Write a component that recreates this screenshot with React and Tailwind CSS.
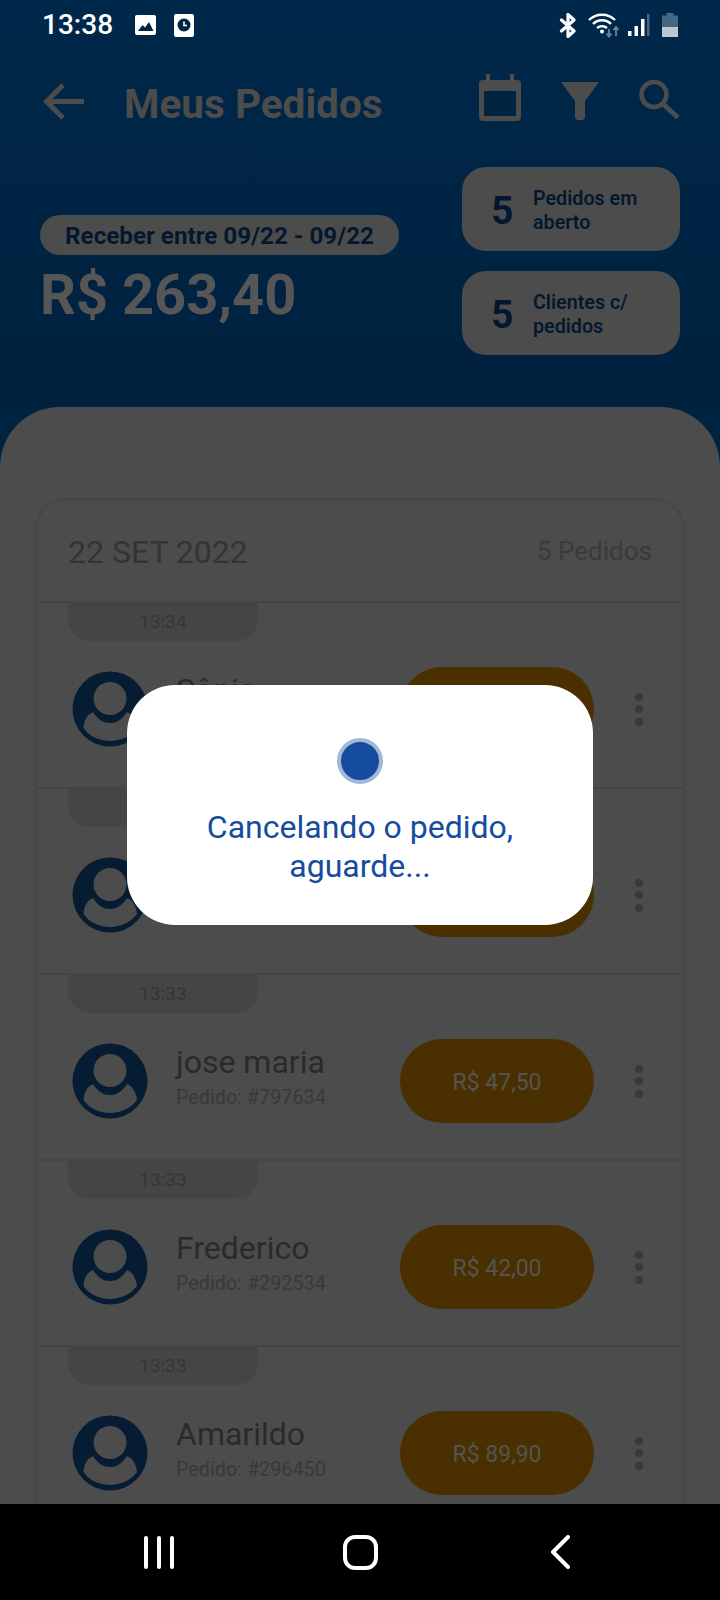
const FG = "#4c4c4c";
const BG = "#002340";
const NAVY = "#061c33";

function Avatar() {
  return (
    <svg width="76" height="76" viewBox="0 0 76 76" className="shrink-0">
      <circle cx="38" cy="38" r="37.5" fill={NAVY} />
      <circle cx="38" cy="27.5" r="16.5" fill={FG} />
      <path d="M11.5 57 C12 48 16 43 21 41 C26 49 32 52 38 52 C44 52 50 49 55 41 C60 43 64 48 65 57 C59 65 49 70 38 70 C27 70 17 65 11.5 57 Z" fill={FG} />
    </svg>
  );
}

function Row({ time, name, id, price }) {
  return (
    <div className="border-t-2 border-[#454545] h-[186px] shrink-0">
      <div className="ml-[31px] w-[190px] h-[38px] rounded-b-[22px] bg-[#454545] flex items-center justify-center text-[19px] text-[#363636]">
        {time}
      </div>
      <div className="mt-[26px] flex items-center pl-[35px]">
        <Avatar />
        <div className="ml-[28px] w-[224px] pb-[5px]">
          <div className="text-[32px] leading-[36px] mb-[3px] text-[#2a2a2a]">{name}</div>
          <div className="text-[19.8px] leading-[30px] text-[#393939]">{id}</div>
        </div>
        <div className="w-[194px] h-[84px] pt-[5px] rounded-full bg-[#4a2f00] flex items-center justify-center text-[23px] text-[#545454]">
          {price}
        </div>
        <div className="ml-[41px] flex flex-col gap-[4.5px]">
          <span className="w-2 h-2 rounded-full bg-[#393939]" />
          <span className="w-2 h-2 rounded-full bg-[#393939]" />
          <span className="w-2 h-2 rounded-full bg-[#393939]" />
        </div>
      </div>
    </div>
  );
}

function Stat({ label }) {
  return (
    <div className="w-[218px] h-[84px] rounded-[24px] bg-[#4c4c4c] flex items-center pl-[29px] pt-[4px] text-[#03182f]">
      <span className="text-[39px] font-bold w-[42px]">5</span>
      <span className="text-[19.7px] leading-[24.5px] font-semibold w-[130px]">{label}</span>
    </div>
  );
}

function StatusBar() {
  return (
    <div className="h-[50px] flex items-center pl-[42px] pr-[42px]">
      <span className="text-[28px] font-medium text-white leading-none w-[93px]">13:38</span>
      <svg width="21" height="20" viewBox="0 0 21 20">
        <rect width="21" height="20" rx="2" fill="#fff" />
        <path d="M3 16 L7.5 10 L10 12.5 L14 7 L18.5 16 Z" fill={BG} />
      </svg>
      <svg width="20" height="23" viewBox="0 0 20 23" className="ml-[18px]">
        <rect width="20" height="23" rx="2" fill="#fff" />
        <circle cx="10" cy="11" r="6.5" fill={BG} />
        <path d="M10 7.5 V11.5 H13" stroke="#fff" strokeWidth="1.6" fill="none" />
      </svg>
      <div className="ml-auto flex items-center">
        <svg width="19" height="25" viewBox="0 0 19 25">
          <path d="M2.5 7 L15 18 L9 23.5 V1.5 L15 7 L2.5 18" stroke="#fff" strokeWidth="3.2" fill="none" strokeLinejoin="round" strokeLinecap="round" />
        </svg>
        <svg width="33" height="25" viewBox="0 0 33 25" className="ml-[10px]">
          <path d="M1 7 C8 0 20 0 27 7" stroke="#fff" strokeWidth="2.4" fill="none" />
          <path d="M5 11 C10 6 18 6 23 11" stroke="#fff" strokeWidth="2.4" fill="none" />
          <path d="M9 15 C12 12.5 16 12.5 19 15" stroke="#fff" strokeWidth="2.4" fill="none" />
          <circle cx="14" cy="18.5" r="2" fill="#fff" />
          <path d="M21 16 V23 M18.5 20.5 L21 23.5 L23.5 20.5" stroke="#6d8296" strokeWidth="1.8" fill="none" />
          <path d="M28 23 V14 M25.5 17 L28 14 L30.5 17" stroke="#6d8296" strokeWidth="1.8" fill="none" />
        </svg>
        <svg width="22" height="24" viewBox="0 0 22 24" className="ml-[7px]">
          <rect x="0" y="18" width="3.5" height="5" fill="#fff" />
          <rect x="6.5" y="13" width="3.5" height="10" fill="#fff" />
          <rect x="13" y="6" width="3.5" height="17" fill="#fff" />
          <rect x="19" y="1" width="2.5" height="22" fill="#466684" />
        </svg>
        <svg width="16" height="24" viewBox="0 0 16 24" className="ml-[12px]">
          <path d="M4.5 0 H11.5 V2.5 H16 V14 H0 V2.5 H4.5 Z" fill="#466684" />
          <rect y="14" width="16" height="10" fill="#bcc6ce" />
        </svg>
      </div>
    </div>
  );
}

function Toolbar() {
  return (
    <div className="h-[50px] mt-[24px] flex items-center pl-[43px]">
      <svg width="41" height="37" viewBox="0 0 41 37" className="shrink-0 mt-[5px]">
        <path d="M41 18.5 H4 M20 2 L3.5 18.5 L20 35" stroke={FG} strokeWidth="5" fill="none" />
      </svg>
      <span className="ml-[40px] mt-[10px] text-[40.5px] leading-[50px] font-bold text-[#4c4c4c] w-[355px] whitespace-nowrap">Meus Pedidos</span>
      <svg width="42" height="47" viewBox="0 0 42 47" className="shrink-0 -mt-[4px]">
        <rect y="6" width="42" height="41" rx="4" fill={FG} />
        <rect x="5" y="17" width="32" height="25" fill={BG} />
        <rect x="7" y="0" width="4" height="7" fill={FG} />
        <rect x="31" y="0" width="4" height="7" fill={FG} />
      </svg>
      <svg width="38" height="38" viewBox="0 0 38 38" className="shrink-0 ml-[40px] mt-[4px]">
        <path d="M0 0 H38 L24 19 V36 L22 38 H16 L14 36 V19 Z" fill={FG} />
      </svg>
      <svg width="41" height="40" viewBox="0 0 41 40" className="shrink-0 ml-[40px] -mt-[1px]">
        <circle cx="15" cy="15.5" r="12.5" stroke={FG} strokeWidth="4.5" fill="none" />
        <path d="M24 25 L39 38.5" stroke={FG} strokeWidth="5" />
      </svg>
    </div>
  );
}

export default function App() {
  return (
    <div className="relative w-[720px] h-[1600px] overflow-hidden flex flex-col bg-[#002340] font-['Roboto',sans-serif]">
      <div className="h-[407px] shrink-0 bg-gradient-to-b from-[#00284a] to-[#00213e]">
        <StatusBar />
        <Toolbar />
        <div className="mt-[43px] flex justify-between pl-[40px] pr-[40px]">
          <div className="pt-[48px]">
            <div className="w-[359px] h-[40px] pt-[2px] rounded-full bg-[#4c4c4c] flex items-center justify-center text-[24.2px] font-bold text-[#03182f]">
              Receber entre 09/22 - 09/22
            </div>
            <div className="mt-[8px] text-[56px] leading-[64px] font-bold text-[#565656]">R$ 263,40</div>
          </div>
          <div className="flex flex-col gap-[20px]">
            <Stat label="Pedidos em aberto" />
            <Stat label="Clientes c/ pedidos" />
          </div>
        </div>
      </div>

      <div className="flex-1 min-h-0 overflow-hidden rounded-t-[60px] bg-[#4c4c4c] px-[35px] pt-[91px]">
        <div className="rounded-t-[32px] border-x-2 border-t-2 border-[#464646]">
          <div className="h-[101px] pt-[2px] flex items-center justify-between pl-[31px] pr-[31px]">
            <span className="text-[32px] text-[#343434]">22 SET 2022</span>
            <span className="text-[26px] text-[#3a3a3a]">5 Pedidos</span>
          </div>
          <Row time="13:34" name="Sônia" id="Pedido: #512873" price="R$ 42,00" />
          <Row time="13:34" name="Carlos" id="Pedido: #640218" price="R$ 42,00" />
          <Row time="13:33" name="jose maria" id="Pedido: #797634" price="R$ 47,50" />
          <Row time="13:33" name="Frederico" id="Pedido: #292534" price="R$ 42,00" />
          <Row time="13:33" name="Amarildo" id="Pedido: #296450" price="R$ 89,90" />
        </div>
      </div>

      <div className="h-[96px] shrink-0 bg-black flex items-center pl-[144px]">
        <div className="flex gap-[9px] shrink-0">
          <span className="w-1 h-[33px] rounded-full bg-white" />
          <span className="w-1 h-[33px] rounded-full bg-white" />
          <span className="w-1 h-[33px] rounded-full bg-white" />
        </div>
        <div className="ml-[169px] w-[35px] h-[35px] rounded-[12px] border-[4px] border-white shrink-0" />
        <svg width="20" height="34" viewBox="0 0 20 34" className="ml-[172px] shrink-0">
          <path d="M18 2 L3 17 L18 32" stroke="#fff" strokeWidth="4" fill="none" strokeLinecap="round" strokeLinejoin="round" />
        </svg>
      </div>

      <div className="absolute left-[127px] top-[685px] w-[466px] h-[240px] rounded-[48px] bg-white flex flex-col items-center pt-[53px]">
        <div className="w-[46px] h-[46px] rounded-full bg-[#154ca0] border-4 border-[#a2b7d9]" />
        <div className="mt-[24px] text-[32px] leading-[39px] text-[#154ca0] text-center">
          Cancelando o pedido,<br />aguarde...
        </div>
      </div>
    </div>
  );
}
